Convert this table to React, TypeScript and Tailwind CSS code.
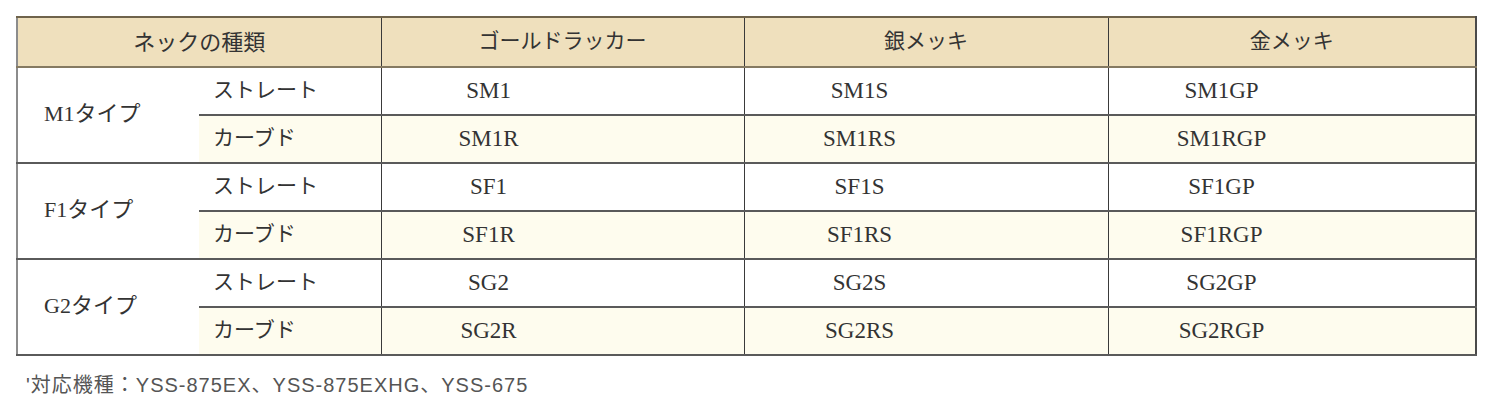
import React from "react";

const serif = { fontFamily: '"Liberation Serif", "Noto Sans CJK JP", serif' };

type Group = { name: string; rows: { kind: string; vals: string[] }[] };

const groups: Group[] = [
  { name: "M1タイプ", rows: [ { kind: "ストレート", vals: ["SM1", "SM1S", "SM1GP"] }, { kind: "カーブド", vals: ["SM1R", "SM1RS", "SM1RGP"] } ] },
  { name: "F1タイプ", rows: [ { kind: "ストレート", vals: ["SF1", "SF1S", "SF1GP"] }, { kind: "カーブド", vals: ["SF1R", "SF1RS", "SF1RGP"] } ] },
  { name: "G2タイプ", rows: [ { kind: "ストレート", vals: ["SG2", "SG2S", "SG2GP"] }, { kind: "カーブド", vals: ["SG2R", "SG2RS", "SG2RGP"] } ] },
];

const innerW = ["w-[214px]", "w-[230px]", "w-[226px]"];

export default function App() {
  return (
    <div className="bg-white w-[1500px] h-[403px] pt-[16px] pl-[16px] text-[#333]">
      <table
        className="table-fixed border-collapse w-[1461px] border-l-2 border-l-[#8c8c8c] border-t-2 border-t-[#6f634b] border-r-2 border-r-[#4a4a4a] border-b-2 border-b-[#5a5a5a]"
        style={serif}
      >
        <colgroup>
          <col className="w-[182px]" />
          <col className="w-[182px]" />
          <col className="w-[363px]" />
          <col className="w-[364px]" />
          <col className="w-[368px]" />
        </colgroup>
        <thead>
          <tr className="h-[50px] bg-[#efe0bd]">
            <th colSpan={2} className="font-normal text-[22px] text-center border-b-2 border-b-[#857a62] border-r border-r-[#3a3a3a]">ネックの種類</th>
            <th className="font-normal text-[21px] text-center border-b-2 border-b-[#857a62] border-r border-r-[#3a3a3a]">ゴールドラッカー</th>
            <th className="font-normal text-[21px] text-center border-b-2 border-b-[#857a62] border-r border-r-[#3a3a3a]">銀メッキ</th>
            <th className="font-normal text-[21px] text-center border-b-2 border-b-[#857a62]">金メッキ</th>
          </tr>
        </thead>
        <tbody>
          {groups.map((g, gi) =>
            g.rows.map((r, ri) => (
              <tr key={gi + "-" + ri} className={"h-[48px] " + (ri === 1 ? "bg-[#fefcee]" : "bg-white")}>
                {ri === 0 && (
                  <td rowSpan={2} className={"bg-white pl-[26px] text-[22px] align-middle " + (gi < 2 ? "border-b-2 border-b-[#5a5a5a]" : "")}>
                    <div className="-mt-[4px]">{g.name}</div>
                  </td>
                )}
                <td className={"pl-[14px] text-[21px] border-r border-r-[#3a3a3a] " + (ri === 0 || gi < 2 ? "border-b-2 border-b-[#5a5a5a]" : "")}>
                  {r.kind}
                </td>
                {r.vals.map((v, vi) => (
                  <td
                    key={v}
                    className={(vi < 2 ? "border-r border-r-[#3a3a3a] " : "") + (ri === 0 || gi < 2 ? "border-b-2 border-b-[#5a5a5a]" : "")}
                  >
                    <div className={innerW[vi] + " text-center text-[23px]"}>{v}</div>
                  </td>
                ))}
              </tr>
            ))
          )}
        </tbody>
      </table>
      <div
        className="mt-[14px] ml-[10px] text-[20px] tracking-[1px] text-[#555]"
        style={{ fontFamily: '"Liberation Sans", "Noto Sans CJK JP", sans-serif' }}
      >
        '対応機種：YSS-875EX、YSS-875EXHG、YSS-675
      </div>
    </div>
  );
}
